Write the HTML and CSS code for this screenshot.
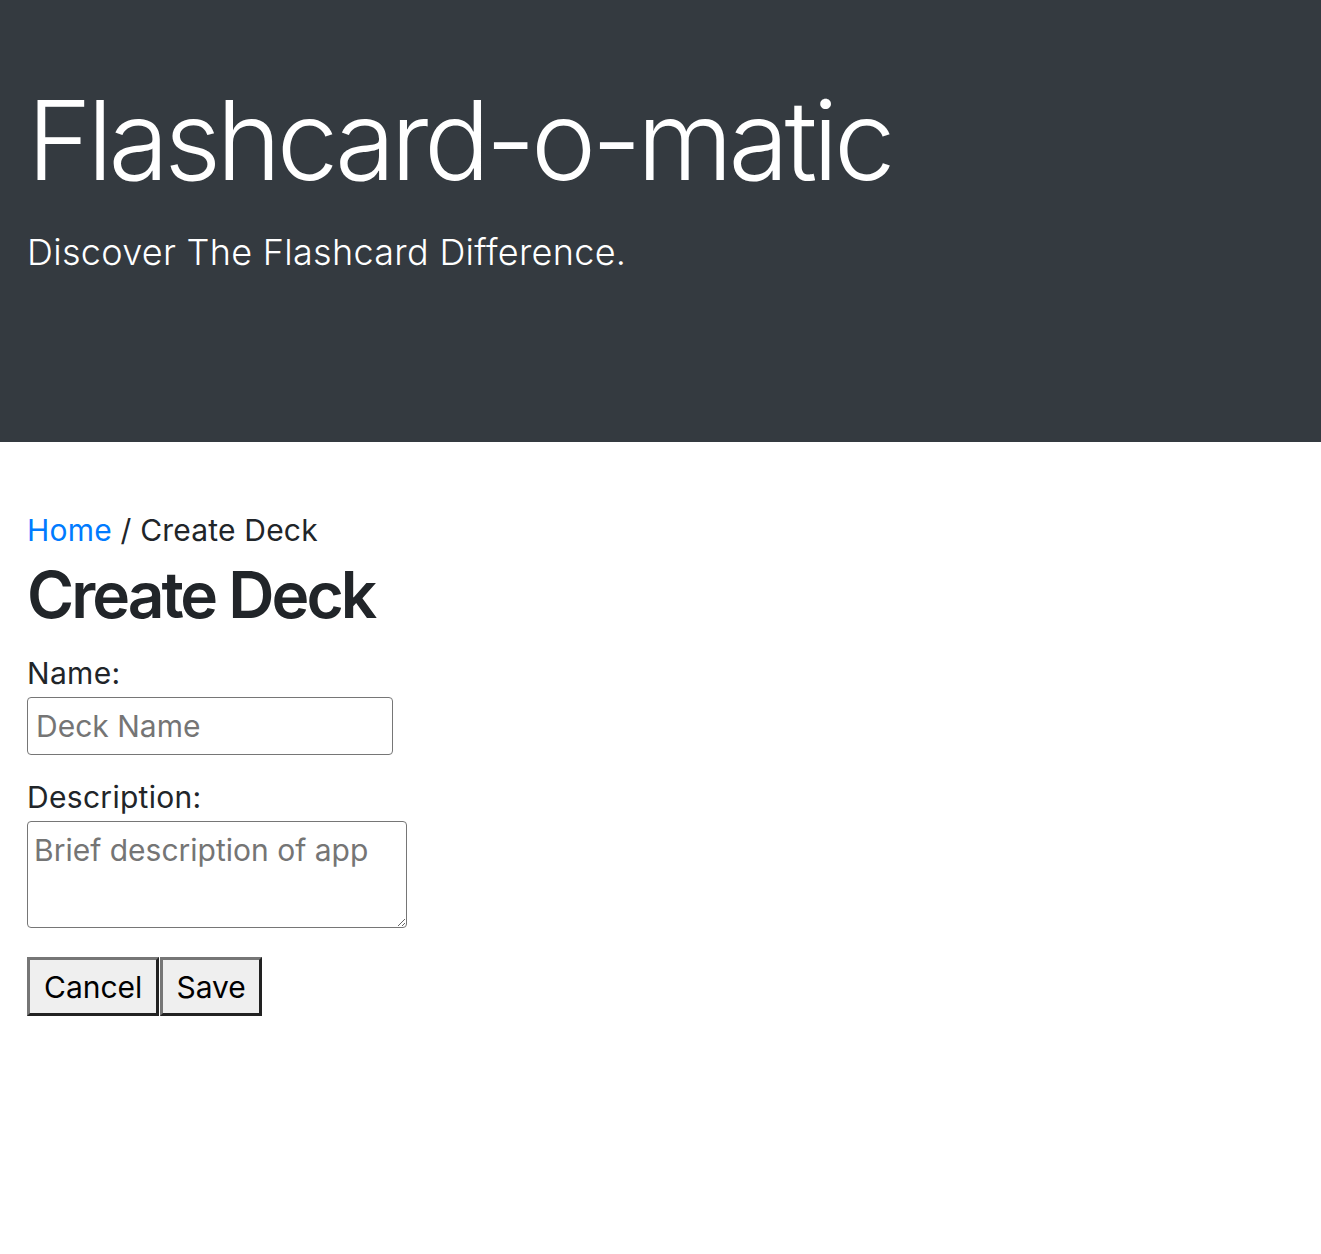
FILE: index.html
```html
<!DOCTYPE html>
<html lang="en">
<head>
<meta charset="utf-8">
<title>Flashcard-o-matic</title>
<link rel="stylesheet" href="styles.css">
</head>
<body>
<header class="jumbo">
  <div class="container">
    <h1 class="title">Flashcard-o-matic</h1>
    <p class="lead">Discover The Flashcard Difference.</p>
  </div>
</header>
<main class="container page">
  <nav class="crumbs"><a href="#" class="crumb-link">Home</a> / Create Deck</nav>
  <h2 class="page-title">Create Deck</h2>
  <form class="deck-form">
    <div class="field">
      <label class="field-label" for="name">Name:</label>
      <input class="text-input" id="name" type="text" placeholder="Deck Name">
    </div>
    <div class="field">
      <label class="field-label" for="desc">Description:</label>
      <textarea class="text-area" id="desc" placeholder="Brief description of app"></textarea>
    </div>
    <div class="actions">
      <button type="button" class="btn">Cancel</button><button type="submit" class="btn">Save</button>
    </div>
  </form>
</main>
</body>
</html>
```
FILE: styles.css
```css
html, body {
  margin: 0;
  padding: 0;
  background: #fff;
}
body {
  font-family: Inter, "Noto Sans", "Liberation Sans", sans-serif;
  color: #212529;
}
.container {
  padding: 0 27px;
}
.jumbo {
  background: #343a40;
  color: #fff;
  height: 442px;
  box-sizing: border-box;
  padding-top: 74px;
}
.title {
  margin: 0;
  font-weight: 300;
  font-size: 110px;
  line-height: 132px;
  letter-spacing: -4.5px;
}
.lead {
  margin: 19px 0 0;
  font-weight: 300;
  font-size: 36px;
  line-height: 54px;
  letter-spacing: 0.3px;
}
.page {
  padding-top: 66px;
}
.crumbs {
  font-size: 30px;
  line-height: 45px;
  letter-spacing: 0.2px;
}
.crumb-link {
  color: #007bff;
  text-decoration: none;
}
.page-title {
  margin: 3px 0 0;
  font-size: 64px;
  font-weight: 600;
  line-height: 77px;
  letter-spacing: -3px;
}
.deck-form {
  margin-top: 18px;
}
.field {
  display: flex;
  flex-direction: column;
  align-items: flex-start;
  margin-bottom: 20px;
}
.field-label {
  font-size: 30px;
  line-height: 45px;
  margin-bottom: 1px;
  letter-spacing: 0.3px;
}
.text-input, .text-area {
  font-family: Inter, "Noto Sans", "Liberation Sans", sans-serif;
  font-size: 30px;
  color: #212529;
  border: 1.5px solid #767676;
  border-radius: 4px;
  box-sizing: border-box;
  background: #fff;
  margin: 0;
}
.text-input {
  width: 366px;
  height: 58px;
  padding: 0 8px;
}
.text-area {
  width: 380px;
  height: 107px;
  padding: 10px 6px 6px;
  line-height: 1.2;
  resize: both;
}
.text-input::placeholder, .text-area::placeholder {
  color: #757575;
}
.actions {
  display: flex;
  gap: 1px;
  margin-top: 29px;
}
.btn {
  font-family: Inter, "Noto Sans", "Liberation Sans", sans-serif;
  font-size: 30px;
  color: #000;
  background: #efefef;
  height: 59px;
  padding: 0 14px;
  border-width: 3px;
  border-style: solid;
  border-color: #767676 #222 #222 #767676;
  border-radius: 0;
  margin: 0;
}
.btn + .btn {
  padding: 0 13px;
}
```
